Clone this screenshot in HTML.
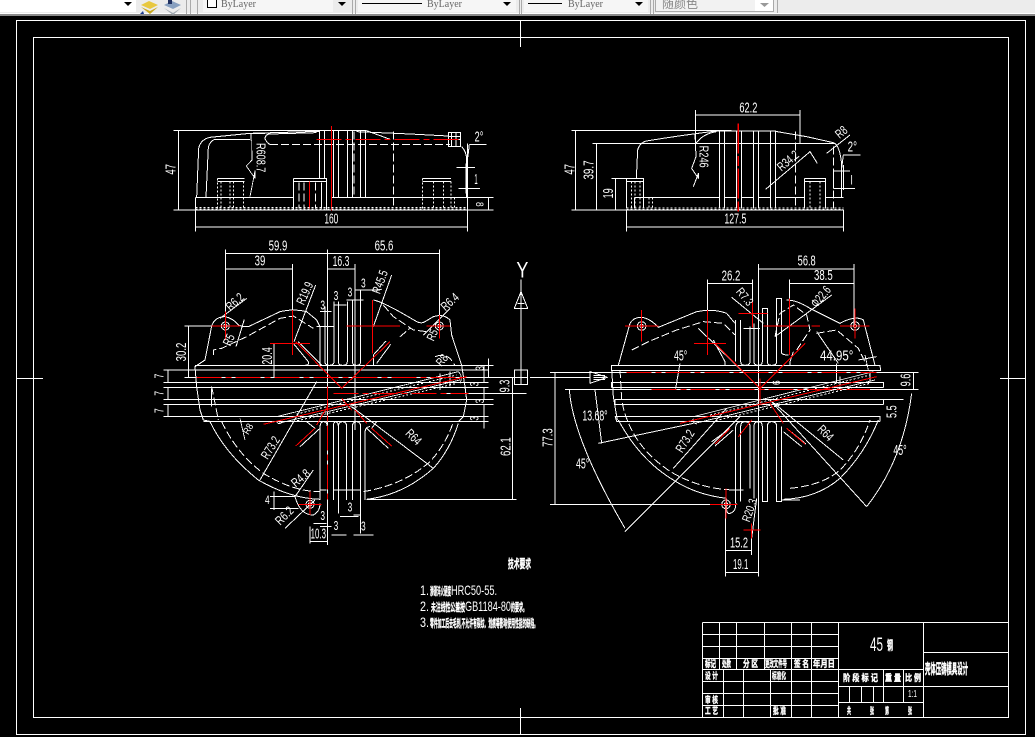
<!DOCTYPE html>
<html lang="zh">
<head>
<meta charset="utf-8">
<title>CAD</title>
<style>
html,body{margin:0;padding:0;background:#000;width:1035px;height:737px;overflow:hidden}
svg{display:block;position:absolute;left:0;top:0}
.w{fill:none;stroke:#fff;stroke-width:1;shape-rendering:crispEdges}
.z{fill:none;stroke:#fff;stroke-width:3;shape-rendering:crispEdges;stroke-linejoin:round}
.d{fill:none;stroke:#fff;stroke-width:3;stroke-dasharray:24 9;shape-rendering:crispEdges}
.t{fill:none;stroke:#fff;stroke-width:3;stroke-dasharray:6 6;shape-rendering:crispEdges}
.r{fill:none;stroke:#f00;stroke-width:3;shape-rendering:crispEdges}
.rd{fill:none;stroke:#f00;stroke-width:3;stroke-dasharray:75 12 18 12;shape-rendering:crispEdges}
text{font-family:"Liberation Sans","Noto Sans CJK SC",sans-serif;fill:#fff}
.n{font-size:44px;text-anchor:middle}
.c{font-weight:bold;stroke:#fff;stroke-width:.4}
.tb{font-family:"Liberation Serif","Noto Sans CJK SC",serif;fill:#666;font-size:10px}
</style>
</head>
<body>
<svg width="1035" height="737" viewBox="0 0 1035 737" xmlns="http://www.w3.org/2000/svg">
<rect width="1035" height="737" fill="#000"/>

<!-- toolbar -->
<rect x="0" y="0" width="1035" height="16" fill="#ececec"/>
<rect x="0" y="13" width="1035" height="1" fill="#fff"/>
<rect x="0" y="14" width="1035" height="2" fill="#8a8a8a"/>
<rect x="0" y="0" width="136" height="12" fill="#fff"/>
<path d="M124 2h8l-4 4z" fill="#000"/>
<path d="M141 5l8-4 9 4-8 4z" fill="#e8c840"/><path d="M141 7l9 4 8-4-8 7z" fill="#c8a820"/>
<path d="M140 14l3-3 1 3z" fill="#1a3a90"/>
<path d="M164 5l8-4 9 4-8 4z" fill="#88a0c0"/><path d="M164 8l9 5 8-5-8 7z" fill="#a0a8b0"/><rect x="168" y="0" width="4" height="4" fill="#203060"/>
<path d="M186.500 0V14M190.500 0V14M197.500 0V14" style="stroke:#aaa" fill="none"/>
<rect x="203" y="0" width="147" height="12" fill="#f6f6f6"/><rect x="333" y="0" width="17" height="12" fill="#ececec"/>
<rect x="207.500" y="-1.500" width="9" height="9" fill="#fff" stroke="#000"/>
<text x="221" y="7" class="tb">ByLayer</text>
<path d="M338 2h8l-4 4z" fill="#000"/>
<rect x="358" y="0" width="158" height="12" fill="#f6f6f6"/><path d="M362 3.500H422" stroke="#000"/>
<text x="427" y="7" class="tb">ByLayer</text><path d="M503 2h8l-4 4z" fill="#000"/>
<rect x="524" y="0" width="124" height="12" fill="#f6f6f6"/><path d="M528 3.500H562" stroke="#000"/>
<text x="568" y="7" class="tb">ByLayer</text><path d="M635 2h8l-4 4z" fill="#000"/>
<path d="M352.500 0V14M355.500 0V14M519.500 0V14M521.500 0V14M650.500 0V14M653.500 0V14" style="stroke:#aaa" fill="none"/>
<rect x="655" y="0" width="118" height="12" fill="#f2f2f2"/><rect x="755" y="0" width="18" height="12" fill="#fff"/>
<path d="M655.500 0V11.500H773.500V0" fill="none" stroke="#aaa"/>
<path d="M777.500 0V13" stroke="#aaa"/>
<text x="662" y="8" style="font-size:12px;fill:#888">随颜色</text>
<path d="M760 3h9l-4.500 4z" fill="#999"/>

<!-- frames -->
<path class="w" d="M16.500 20.500H1025.500V734.500H16.500Z"/>
<path class="w" d="M33.500 37.500H1008.500V717.500H33.500Z"/>
<path class="w" d="M520.500 20V47M520.500 708V734M16 378.500H43M1000 378.500H1025"/>

<!-- TOP LEFT VIEW -->
<g transform="translate(150,110) scale(.33333)">
<path class="z" d="M70 61H510M70 300H1030M85 61V300M136 262H430M545 262H950M136 262V365M953 100V365M136 351H953"/>
<path class="z" d="M140 262L146 115Q152 88 180 82L300 70L510 64M168 262L175 112Q180 92 195 88H300M303 70V92M303 70H345M345 88Q345 72 360 72L500 68M620 65L780 72L895 78M650 62L720 88"/>
<path class="d" d="M360 103H900M345 85Q350 100 360 103M730 65V296M612 65V262"/>
<path class="z" d="M895 67H932V110H895ZM905 67V110M918 67V110M895 80H932M895 88H932M935 110Q950 125 950 150V262"/>
<path class="z" d="M508 62V205M524 62V205M550 62V262M565 62V262M592 62V262M608 62V262M632 62V262M647 62V262M508 62H650"/>
<path class="z" d="M430 205H530V298M430 205V298M430 215H530"/>
<path class="d" d="M447 218V296M462 218V296M497 218V296"/>
<path class="z" d="M514 218V296"/>
<path class="r" d="M478 215V296M544 48V302"/>
<path class="rd" d="M500 88H935"/>
<path class="z" d="M203 205H283M203 215H283"/>
<path class="t" d="M203 205V296M213 215V296M240 215V296M250 215V296M281 215V296M817 205V296M850 215V296M880 215V296M903 215V296M913 262V296"/>
<path class="z" d="M817 205H903M817 215H903"/>
<path class="t" d="M136 292H950M136 297H950"/>
<path class="z" d="M958 103H1010M958 103Q955 130 952 150M920 173H975M925 235H990M948 160V250M1015 262V300M950 262H1030"/>
<path class="z" d="M305 92L306 150L289 168L315 205V183L300 260" style="stroke-width:2.500"/>
<text class="n" transform="translate(544,341)" textLength="42" lengthAdjust="spacingAndGlyphs">160</text>
<text class="n" transform="translate(76,178) rotate(-90)" textLength="32" lengthAdjust="spacingAndGlyphs">47</text>
<text class="n" transform="translate(320,143) rotate(90)" textLength="88" lengthAdjust="spacingAndGlyphs" style="font-size:38px">R608.7</text>
<text class="n" transform="translate(987,94)" textLength="26" lengthAdjust="spacingAndGlyphs">2°</text>
<text class="n" transform="translate(978,222)" textLength="10" lengthAdjust="spacingAndGlyphs">1</text>
<text class="n" transform="translate(978,283) rotate(90)" textLength="14" lengthAdjust="spacingAndGlyphs" style="font-size:34px">8</text>
</g>

<!-- TOP RIGHT VIEW -->
<g transform="translate(540,110) scale(.33333)">
<path class="z" d="M95 61H575M95 300H910M107 61V300M157 100H310M170 100V300M215 205H260M227 205V300"/>
<path class="z" d="M289 205L293 120Q300 95 325 92Q430 75 530 63H700L800 80L880 98Q900 105 905 165V262"/>
<path class="z" d="M310 100H885M538 62V295M553 62V295M590 62V295M604 62V295M640 62V295M656 62V295M692 62V295M706 62V295"/>
<path class="z" d="M283 262H538M553 262H590M604 262H640M656 262H692M706 262H795M857 262H910M283 262V296"/>
<path class="z" d="M260 205H310V296M260 205V296M260 215H310M793 205H857V296M793 205V296M793 215H857"/>
<path class="t" d="M275 215V296M285 215V296M300 215V296M327 262V296M337 262V296M810 215V296M840 215V296"/>
<path class="d" d="M767 65V296M880 110V296"/>
<path class="t" d="M260 294H910M260 298H910"/>
<path class="r" style="stroke-dasharray:90 8 30 8;stroke-width:4" d="M595 40V310"/>
<path class="z" d="M467 0V100M780 0V100M467 15H780M260 300V365M910 300V365M260 351H910"/>
<path class="z" d="M465 70L468 140L455 175L475 205V190L460 230M468 100Q490 70 530 65"/>
<path class="z" d="M677 238L810 125L832 160M860 130L930 75"/>
<path class="z" d="M905 175L910 135H962M880 183H930M880 235H945M910 165V240"/>
<path class="z" d="M880 183V235"/>
<text class="n" transform="translate(586,341)" textLength="66" lengthAdjust="spacingAndGlyphs">127.5</text>
<text class="n" transform="translate(103,178) rotate(-90)" textLength="32" lengthAdjust="spacingAndGlyphs">47</text>
<text class="n" transform="translate(160,180) rotate(-90)" textLength="58" lengthAdjust="spacingAndGlyphs">39.7</text>
<text class="n" transform="translate(219,250) rotate(-90)" textLength="30" lengthAdjust="spacingAndGlyphs">19</text>
<text class="n" transform="translate(625,7)" textLength="54" lengthAdjust="spacingAndGlyphs">62.2</text>
<text class="n" transform="translate(478,140) rotate(90)" textLength="66" lengthAdjust="spacingAndGlyphs" style="font-size:38px">R246</text>
<text class="n" transform="translate(752,162) rotate(-40)" textLength="72" lengthAdjust="spacingAndGlyphs" style="font-size:38px">R34.2</text>
<text class="n" transform="translate(912,76) rotate(-40)" textLength="34" lengthAdjust="spacingAndGlyphs" style="font-size:38px">R8</text>
<text class="n" transform="translate(937,124)" textLength="28" lengthAdjust="spacingAndGlyphs">2°</text>
<text class="n" transform="translate(935,224)" textLength="6" lengthAdjust="spacingAndGlyphs" style="font-size:38px">l</text>
</g>

<!-- LEFT PLAN VIEW -->
<g transform="translate(150,240) scale(.33333)">
<path class="z" d="M135 376H1030M40 390H1015M40 427H1015M40 442H1015M40 478H1030M40 493H1030M40 529H1015M160 544H1015M54 390V427M54 442V478M54 493V529M1015 355V412M1002 376V427M1002 442V478M1002 493V565"/>
<path class="z" d="M226 28V250M868 28V250M532 28V915M226 41H868M226 87H428M532 87H615M428 72V210M615 72V570M103 258H185M115 258V412M103 412H1093M360 310H385M372 310V412M880 460H1130M1087 412V778M650 778H1100"/>
<path class="z" d="M1113 118V205M1113 205V390M1113 155L1093 205H1133ZM1103 190H1123M1093 390H1133V433H1093ZM1113 390V433M1093 412H1133"/>
<text class="n" transform="translate(1117,112)" textLength="36" lengthAdjust="spacingAndGlyphs" style="font-size:66px">Y</text>
<path class="z" d="M185 258Q195 230 225 230Q250 235 265 255L280 260H295L390 215Q430 205 470 215L500 240L510 260V345M185 258L165 360L135 380L140 440L150 510L160 540L185 545M670 180Q700 185 800 245Q815 252 825 245L850 230Q880 220 900 240L905 285L935 376L945 440L950 480L940 530L925 545"/>
<path class="z" d="M180 545Q225 640 325 720Q420 775 510 778M650 778Q760 765 850 685Q900 630 925 550"/>
<path class="d" d="M215 545Q260 640 340 700Q430 755 510 755M640 755Q760 735 840 665Q890 610 910 545M190 345V330L215 325L290 290L390 235L430 228L490 265M700 195L730 230L790 270L830 275M750 290L780 265M855 350Q880 340 900 355L915 376M185 440L205 540"/>
<path class="z" d="M525 200V365Q525 376 538 376Q552 376 552 365V185M565 185V365Q565 376 578 376Q592 376 592 365V185M607 180V365Q607 376 620 376Q632 376 632 365V150M510 215H545M500 260H552M550 195H590M590 180H640M615 150H690"/>
<path class="z" d="M510 780V565Q510 545 520 545Q532 545 532 560M550 780V560Q550 545 558 545Q565 548 565 560V820M565 560Q565 545 578 545Q590 545 590 560V780M607 780V560Q607 545 620 545Q632 545 632 560V880M645 780V580Q645 560 660 560"/>
<path class="z" d="M430 310L475 365Q478 376 465 376M445 305L515 376M708 303L670 345V376M722 313L680 370M510 345V376M437 618L495 565L470 545M450 620L510 565M725 618L665 565L680 545M715 625L650 565"/>
<path class="z" d="M185 445V500M510 750H530M550 750H632M510 860H545M610 825H630M570 830H625M490 850H530M610 885H670M545 885H590M480 860V910M532 905H480M372 755V810M360 770H435M360 805H445"/>
<path class="z" d="M435 770Q450 825 490 825Q510 815 510 790"/>
<circle class="z" cx="226" cy="258" r="12"/><circle class="z" cx="226" cy="258" r="5"/>
<circle class="z" cx="868" cy="258" r="12"/><circle class="z" cx="868" cy="258" r="5"/>
<circle class="z" cx="480" cy="793" r="12"/><circle class="z" cx="480" cy="793" r="5"/>
<path class="z" d="M432 305L497 135M210 235L290 175M258 320L283 238M900 205L820 285M670 260L725 105M330 720L500 425M605 500L850 685M435 770L490 690M405 865L495 780"/>
<path class="z" style="stroke-width:2.500" d="M380 530L925 395M385 550L930 420M270 535L285 600M380 545Q385 555 395 548M870 400V450M900 395V440M925 395Q940 410 930 430"/>
<path class="t" d="M440 522L920 405M430 545L920 430"/>
<path class="r" d="M185 258H270M226 215V300M830 258H900M868 225V295M445 793H515M480 755V825M360 310H480M428 210V345M590 258H750M668 180V340M437 305L575 445L720 305M437 618L495 565M725 618L665 565M532 500L500 555M615 510L650 550M575 475L605 510"/>
<path class="rd" d="M140 412H950M550 460H955M532 440V790"/>
<path class="r" d="M340 553L950 410"/>
<text class="n" transform="translate(384,31)" textLength="56" lengthAdjust="spacingAndGlyphs">59.9</text>
<text class="n" transform="translate(702,31)" textLength="56" lengthAdjust="spacingAndGlyphs">65.6</text>
<text class="n" transform="translate(330,76)" textLength="32" lengthAdjust="spacingAndGlyphs">39</text>
<text class="n" transform="translate(573,78)" textLength="50" lengthAdjust="spacingAndGlyphs">16.3</text>
<text class="n" transform="translate(108,336) rotate(-90)" textLength="56" lengthAdjust="spacingAndGlyphs">30.2</text>
<text class="n" transform="translate(366,348) rotate(-90)" textLength="52" lengthAdjust="spacingAndGlyphs">20.4</text>
<text class="n" transform="translate(263,195) rotate(-42)" textLength="58" lengthAdjust="spacingAndGlyphs" style="font-size:38px">R6.2</text>
<text class="n" transform="translate(248,305) rotate(-65)" textLength="34" lengthAdjust="spacingAndGlyphs" style="font-size:38px">R5</text>
<text class="n" transform="translate(476,165) rotate(-65)" textLength="70" lengthAdjust="spacingAndGlyphs" style="font-size:38px">R19.9</text>
<text class="n" transform="translate(702,130) rotate(-70)" textLength="72" lengthAdjust="spacingAndGlyphs" style="font-size:38px">R45.5</text>
<text class="n" transform="translate(908,195) rotate(-42)" textLength="58" lengthAdjust="spacingAndGlyphs" style="font-size:38px">R6.4</text>
<text class="n" transform="translate(858,290) rotate(-65)" textLength="34" lengthAdjust="spacingAndGlyphs" style="font-size:36px">R5</text>
<text class="n" transform="translate(885,368) rotate(-50)" textLength="34" lengthAdjust="spacingAndGlyphs" style="font-size:36px">R8</text>
<text class="n" transform="translate(372,630) rotate(-58)" textLength="72" lengthAdjust="spacingAndGlyphs" style="font-size:38px">R73.2</text>
<text class="n" transform="translate(782,600) rotate(45)" textLength="50" lengthAdjust="spacingAndGlyphs" style="font-size:38px">R64</text>
<text class="n" transform="translate(460,724) rotate(-40)" textLength="60" lengthAdjust="spacingAndGlyphs" style="font-size:38px">R4.8</text>
<text class="n" transform="translate(412,836) rotate(-45)" textLength="60" lengthAdjust="spacingAndGlyphs" style="font-size:38px">R6.2</text>
<text class="n" transform="translate(1079,438) rotate(-90)" textLength="38" lengthAdjust="spacingAndGlyphs">9.3</text>
<text class="n" transform="translate(1081,620) rotate(-90)" textLength="56" lengthAdjust="spacingAndGlyphs">62.1</text>
<text class="n" transform="translate(505,896)" textLength="46" lengthAdjust="spacingAndGlyphs">10.3</text>
<text class="n" transform="translate(40,408) rotate(-90)" textLength="14" lengthAdjust="spacingAndGlyphs" style="font-size:40px">7</text>
<text class="n" transform="translate(40,460) rotate(-90)" textLength="14" lengthAdjust="spacingAndGlyphs" style="font-size:40px">7</text>
<text class="n" transform="translate(40,512) rotate(-90)" textLength="14" lengthAdjust="spacingAndGlyphs" style="font-size:40px">7</text>
<text class="n" transform="translate(518,208)" textLength="14" lengthAdjust="spacingAndGlyphs" style="font-size:40px">3</text>
<text class="n" transform="translate(558,180)" textLength="14" lengthAdjust="spacingAndGlyphs" style="font-size:40px">3</text>
<text class="n" transform="translate(600,170)" textLength="14" lengthAdjust="spacingAndGlyphs" style="font-size:40px">3</text>
<text class="n" transform="translate(640,142)" textLength="14" lengthAdjust="spacingAndGlyphs" style="font-size:40px">3</text>
<text class="n" transform="translate(600,815)" textLength="14" lengthAdjust="spacingAndGlyphs" style="font-size:40px">3</text>
<text class="n" transform="translate(518,840)" textLength="14" lengthAdjust="spacingAndGlyphs" style="font-size:40px">3</text>
<text class="n" transform="translate(558,870)" textLength="14" lengthAdjust="spacingAndGlyphs" style="font-size:40px">3</text>
<text class="n" transform="translate(640,872)" textLength="14" lengthAdjust="spacingAndGlyphs" style="font-size:40px">3</text>
<text class="n" transform="translate(352,792)" textLength="14" lengthAdjust="spacingAndGlyphs" style="font-size:36px">4</text>
<text class="n" transform="translate(1002,385) rotate(-90)" textLength="14" lengthAdjust="spacingAndGlyphs" style="font-size:36px">3</text>
<text class="n" transform="translate(986,432) rotate(-90)" textLength="14" lengthAdjust="spacingAndGlyphs" style="font-size:36px">3</text>
<text class="n" transform="translate(1002,483) rotate(-90)" textLength="14" lengthAdjust="spacingAndGlyphs" style="font-size:36px">3</text>
<text class="n" transform="translate(986,535) rotate(-90)" textLength="14" lengthAdjust="spacingAndGlyphs" style="font-size:36px">3</text>
<text class="n" transform="translate(303,572) rotate(-60)" textLength="32" lengthAdjust="spacingAndGlyphs" style="font-size:30px">R8</text>
</g>

<!-- RIGHT PLAN VIEW -->
<g transform="translate(530,240) scale(.33333)">
<path class="z" d="M245 376H1050L1052 392H245ZM60 397H1165M245 427H1060V442H245ZM105 448H1165M255 478H1120M255 493H1060V478M255 478V493M255 529H1050V544H260L255 529M1151 397V448"/>
<path class="z" d="M685 72V1010M685 87H972M972 72V260M778 130H972M778 118V345M532 130H667M532 118V345M667 118V180M75 397V793M60 793H590M586 793V1010M665 870V945M586 932H665M586 997H685M0 412H180M180 395V430L232 412ZM190 406H225M190 412H225M190 418H225"/>
<path class="z" d="M265 376L300 250Q310 232 335 232Q360 235 385 262L500 215Q550 205 590 220L615 250M770 180Q800 180 840 205L930 250Q975 225 1000 240L1035 376M245 385L250 470L262 540"/>
<path class="z" d="M265 540Q330 660 430 720Q500 765 590 775M760 778Q860 775 930 715Q1005 640 1045 540"/>
<path class="d" d="M305 330L355 305L440 270L520 245L580 250L615 285M735 290L750 220L790 195L830 225L840 270L800 330M860 280L920 270L985 325L1010 376M270 390L275 480Q300 620 430 700Q520 750 620 750M780 745Q880 735 930 690Q990 630 1020 540"/>
<path class="z" d="M617 240V365M632 240V365Q632 376 645 376Q660 376 660 365V260M672 250V365Q672 376 685 376Q697 376 697 365V205Q705 205 712 205V365Q712 376 725 376Q740 376 740 365V175H755V340Q760 345 775 345"/>
<path class="z" d="M617 785V560Q620 545 632 545M632 785V560Q632 545 645 545Q660 545 660 560V745M672 775V560Q672 545 685 545Q697 545 697 560V785H712V560Q712 545 725 545Q740 545 740 560V785H755V560M755 780H810"/>
<path class="z" d="M550 300L585 365V376H565M790 335L780 365V376H800M545 605L600 565M555 618L610 570M770 565L828 612M760 575L815 620M600 750H640M690 265H640M590 775Q585 825 600 820Q620 815 617 785"/>
<circle class="z" cx="335" cy="258" r="13"/><circle class="z" cx="335" cy="258" r="5"/>
<circle class="z" cx="975" cy="258" r="13"/><circle class="z" cx="975" cy="258" r="5"/>
<circle class="z" cx="588" cy="793" r="13"/><circle class="z" cx="588" cy="793" r="5"/>
<path class="z" d="M285 875L630 530M1010 800L720 480M118 450Q130 600 285 865M1145 460Q1120 660 1010 800M505 265L690 445M450 370L437 445M205 610L490 550M195 450L215 610M430 685L590 505M720 480L940 660M605 172L700 250M735 290L905 165M860 275L925 370M920 370V430M985 360L1040 350M665 895L680 775"/>
<path class="z" style="stroke-width:2.500" d="M490 530L1030 395M495 550L1035 420M490 535Q485 548 500 552M930 410V440M1020 395V425M1005 345L1015 390"/>
<path class="t" d="M540 525L1020 405M545 545L1020 430"/>
<path class="r" d="M285 258H385M335 210V305M930 258H1018M975 205V295M700 258H835M778 175V345M492 310H588M532 210V345M625 220H712M667 180V262M640 870H692M665 850V895M540 793H622M588 745V835M555 310L690 445L825 310M555 612L600 565M825 612L770 565M690 470V490M720 490L760 550M665 540L625 590"/>
<path class="rd" d="M290 397H1040M365 448H1020"/>
<path class="r" d="M450 550L1040 410M845 258H870M690 415V470"/>
<text class="n" transform="translate(830,76)" textLength="54" lengthAdjust="spacingAndGlyphs">56.8</text>
<text class="n" transform="translate(880,120)" textLength="56" lengthAdjust="spacingAndGlyphs">38.5</text>
<text class="n" transform="translate(603,122)" textLength="56" lengthAdjust="spacingAndGlyphs">26.2</text>
<text class="n" transform="translate(452,362)" textLength="40" lengthAdjust="spacingAndGlyphs">45°</text>
<text class="n" transform="translate(920,362)" textLength="100" lengthAdjust="spacingAndGlyphs">44.95°</text>
<text class="n" transform="translate(195,541)" textLength="76" lengthAdjust="spacingAndGlyphs">13.68°</text>
<text class="n" transform="translate(158,685)" textLength="40" lengthAdjust="spacingAndGlyphs">45°</text>
<text class="n" transform="translate(1110,645)" textLength="40" lengthAdjust="spacingAndGlyphs">45°</text>
<text class="n" transform="translate(68,593) rotate(-90)" textLength="56" lengthAdjust="spacingAndGlyphs">77.3</text>
<text class="n" transform="translate(1141,420) rotate(-90)" textLength="38" lengthAdjust="spacingAndGlyphs">9.6</text>
<text class="n" transform="translate(1100,515) rotate(-90)" textLength="38" lengthAdjust="spacingAndGlyphs">5.5</text>
<text class="n" transform="translate(627,922)" textLength="54" lengthAdjust="spacingAndGlyphs">15.2</text>
<text class="n" transform="translate(632,987)" textLength="46" lengthAdjust="spacingAndGlyphs">19.1</text>
<text class="n" transform="translate(476,610) rotate(-58)" textLength="72" lengthAdjust="spacingAndGlyphs" style="font-size:38px">R73.2</text>
<text class="n" transform="translate(878,588) rotate(45)" textLength="50" lengthAdjust="spacingAndGlyphs" style="font-size:38px">R64</text>
<text class="n" transform="translate(670,815) rotate(-70)" textLength="70" lengthAdjust="spacingAndGlyphs" style="font-size:36px">R20.3</text>
<text class="n" transform="translate(635,178) rotate(50)" textLength="58" lengthAdjust="spacingAndGlyphs" style="font-size:36px">R7.3</text>
<text class="n" transform="translate(882,178) rotate(-50)" textLength="70" lengthAdjust="spacingAndGlyphs" style="font-size:38px">Φ22.6</text>
<text class="n" transform="translate(728,428) rotate(90)" textLength="14" lengthAdjust="spacingAndGlyphs" style="font-size:32px">9</text>
</g>

<!-- technical requirements -->
<g class="c">
<text x="508" y="568" style="font-size:12px" textLength="23" lengthAdjust="spacingAndGlyphs">技术要求</text>
<text x="430" y="595" style="font-size:11px" textLength="21" lengthAdjust="spacingAndGlyphs">渗碳淬火硬度</text>
<text x="431" y="611" style="font-size:11px" textLength="34" lengthAdjust="spacingAndGlyphs">未注线性公差按</text>
<text x="511" y="611" style="font-size:11px" textLength="16" lengthAdjust="spacingAndGlyphs">的要求。</text>
<text x="430" y="627" style="font-size:11px" textLength="108" lengthAdjust="spacingAndGlyphs">零件加工后去毛刺,不允许有裂纹、划痕等影响使用性能的缺陷。</text>
</g>
<text x="420" y="595" style="font-size:14px" textLength="9" lengthAdjust="spacingAndGlyphs">1.</text>
<text x="451" y="595" style="font-size:14px" textLength="46" lengthAdjust="spacingAndGlyphs">HRC50-55.</text>
<text x="420" y="611" style="font-size:14px" textLength="9" lengthAdjust="spacingAndGlyphs">2.</text>
<text x="465" y="611" style="font-size:14px" textLength="46" lengthAdjust="spacingAndGlyphs">GB1184-80</text>
<text x="420" y="627" style="font-size:14px" textLength="9" lengthAdjust="spacingAndGlyphs">3.</text>

<!-- title block -->
<path class="w" d="M702.500 622.500H1008M702.500 622.500V717.500M702.500 634.500H838.500M702.500 646.500H838.500M702.500 658.500H838.500M702.500 669.500H923.500M702.500 681.500H838.500M702.500 693.500H838.500M702.500 705.500H838.500
M719.500 622.500V669.500M736.500 622.500V669.500M764.500 622.500V669.500M791.500 622.500V717.500M811.500 622.500V717.500M838.500 622.500V717.500
M723.500 669.500V717.500M743.500 669.500V717.500M770.500 669.500V717.500
M923.500 622.500V717.500M923.500 652.500H1008M838.500 686.500H1008M838.500 702.500H923.500
M883.500 669.500V702.500M903.500 669.500V702.500M849.500 686.500V702.500M861.500 686.500V702.500M873.500 686.500V702.500"/>
<text x="870" y="651" style="font-size:19px" textLength="13" lengthAdjust="spacingAndGlyphs">45</text>
<text x="887" y="650" class="c" style="font-size:13px" textLength="6" lengthAdjust="spacingAndGlyphs">钢</text>
<g class="c" style="font-size:9px">
<text x="705" y="667" textLength="11" lengthAdjust="spacingAndGlyphs">标记</text>
<text x="722" y="667" textLength="9" lengthAdjust="spacingAndGlyphs">处数</text>
<text x="743" y="667" textLength="15" lengthAdjust="spacingAndGlyphs">分 区</text>
<text x="765" y="667" textLength="22" lengthAdjust="spacingAndGlyphs">更改文件号</text>
<text x="794" y="667" textLength="15" lengthAdjust="spacingAndGlyphs">签 名</text>
<text x="813" y="667" textLength="22" lengthAdjust="spacingAndGlyphs">年月日</text>
<text x="705" y="679" textLength="13" lengthAdjust="spacingAndGlyphs">设 计</text>
<text x="772" y="679" textLength="14" lengthAdjust="spacingAndGlyphs">标准化</text>
<text x="705" y="703" textLength="13" lengthAdjust="spacingAndGlyphs">审 核</text>
<text x="705" y="714" textLength="13" lengthAdjust="spacingAndGlyphs">工 艺</text>
<text x="773" y="714" textLength="13" lengthAdjust="spacingAndGlyphs">批 准</text>
<text x="843" y="681" textLength="35" lengthAdjust="spacingAndGlyphs">阶 段 标 记</text>
<text x="885" y="681" textLength="16" lengthAdjust="spacingAndGlyphs">重 量</text>
<text x="905" y="681" textLength="16" lengthAdjust="spacingAndGlyphs">比 例</text>
<text x="847" y="714" textLength="4" lengthAdjust="spacingAndGlyphs">共</text>
<text x="870" y="714" textLength="4" lengthAdjust="spacingAndGlyphs">张</text>
<text x="885" y="714" textLength="4" lengthAdjust="spacingAndGlyphs">第</text>
<text x="908" y="714" textLength="4" lengthAdjust="spacingAndGlyphs">张</text>
</g>
<text x="908" y="697" style="font-size:10px" textLength="9" lengthAdjust="spacingAndGlyphs">1:1</text>
<text x="925" y="674" class="c" style="font-size:14px;stroke-width:.5" textLength="43" lengthAdjust="spacingAndGlyphs">壳体压铸模具设计</text>
</svg>
</body>
</html>
